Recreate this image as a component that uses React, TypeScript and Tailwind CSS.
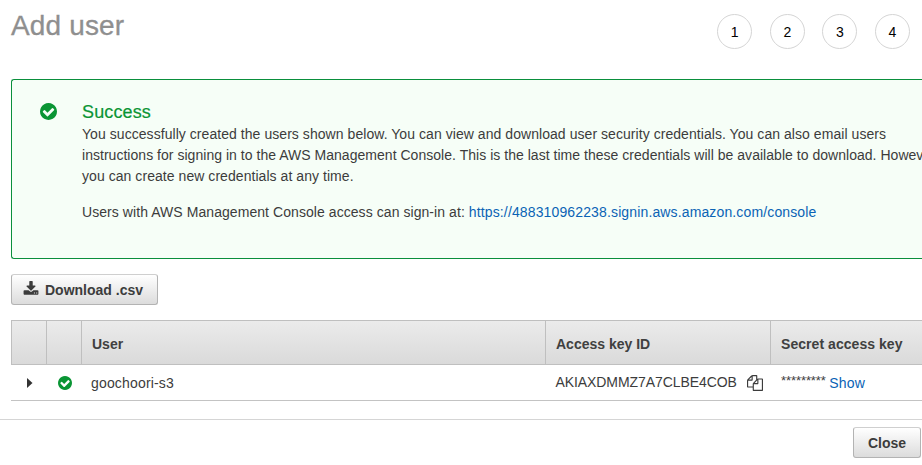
import React from "react";

const CheckCircle = ({ className }: { className: string }) => (
  <svg viewBox="0 0 1536 1536" fill="currentColor" className={className} aria-hidden="true">
    <path d="M1284 606q0-28-18-46l-91-90q-19-19-45-19t-45 19l-408 407-226-226q-19-19-45-19t-45 19l-91 90q-18 18-18 46 0 27 18 45l362 362q19 19 45 19 27 0 46-19l543-543q18-18 18-45zm252 162q0 209-103 385.5T1153.5 1433 768 1536t-385.5-103T103 1153.5 0 768t103-385.5T382.5 103 768 0t385.5 103T1433 382.5 1536 768z" />
  </svg>
);

const DownloadIcon = () => (
  <svg viewBox="0 0 1792 1792" fill="currentColor" className="-mt-0.5 h-4 w-4" aria-hidden="true">
    <path d="M1344 1344q0-26-19-45t-45-19-45 19-19 45 19 45 45 19 45-19 19-45zm256 0q0-26-19-45t-45-19-45 19-19 45 19 45 45 19 45-19 19-45zm128-224v320q0 40-28 68t-68 28h-1472q-40 0-68-28t-28-68v-320q0-40 28-68t68-28h465l135 136q58 56 136 56t136-56l136-136h464q40 0 68 28t28 68zm-325-569q17 41-14 70l-448 448q-18 19-45 19t-45-19l-448-448q-31-29-14-70 17-39 59-39h256v-448q0-26 19-45t45-19h256q26 0 45 19t19 45v448h256q42 0 59 39z" />
  </svg>
);

const CopyIcon = () => (
  <svg viewBox="0 0 1792 1792" fill="currentColor" className="h-4 w-4 shrink-0" aria-hidden="true">
    <path d="M1696 384q40 0 68 28t28 68v1216q0 40-28 68t-68 28h-960q-40 0-68-28t-28-68v-288h-544q-40 0-68-28t-28-68v-672q0-40 20-88t48-76l408-408q28-28 76-48t88-20h416q40 0 68 28t28 68v328q68-40 128-40h416zm-544 213l-299 299h299v-299zm-640-384l-299 299h299v-299zm196 647l316-316v-416h-384v416q0 40-28 68t-68 28h-416v640h512v-256q0-40 20-88t48-76zm956 804v-1152h-384v416q0 40-28 68t-68 28h-416v640h896z" />
  </svg>
);

const buttonClass =
  "flex items-center rounded-[3px] border border-[#b3b3b3] border-t-[#cfcfcf] bg-linear-to-b from-white to-[#dcdcdc] font-bold text-[#3c3c3c]";

export default function App() {
  return (
    <div className="flex h-[465px] w-[922px] flex-col overflow-hidden bg-white font-['Helvetica_Neue','Liberation_Sans',Arial,sans-serif] text-sm whitespace-nowrap text-[#3c3c3c]">
      <header className="flex h-[79px] shrink-0 justify-between pr-3 pl-[11px]">
        <h1 className="pt-2 text-[28px] leading-9 tracking-[0.15px] text-[#8f8f8f] [-webkit-text-stroke:0.3px_#8f8f8f]">Add user</h1>
        <ol className="flex gap-[17.6px] pt-3.5">
          {[1, 2, 3, 4].map((n) => (
            <li
              key={n}
              className="flex h-[35px] w-[35px] items-center justify-center rounded-full border border-[#d5d5d5] pt-px text-sm text-black"
            >
              {n}
            </li>
          ))}
        </ol>
      </header>

      <section className="ml-[11px] flex h-[180px] shrink-0 rounded-l-[3px] border border-r-0 border-[#0a8f3c] bg-[#f6fef7]">
        <div className="w-[70px] shrink-0 pt-[22.5px] pl-[27.5px] text-[#0a9534]">
          <CheckCircle className="h-[17px] w-[17px]" />
        </div>
        <div className="pt-[21px] leading-[21px]">
          <h2 className="h-[23px] text-lg leading-[23px] tracking-[0.12px] text-[#0a9534] [-webkit-text-stroke:0.2px_#0a9534]">Success</h2>
          <p className="tracking-[0.055px]">
            You successfully created the users shown below. You can view and download user security credentials. You can also email users
            <br />
            <span className="tracking-[0.03px]">
              instructions for signing in to the AWS Management Console. This is the last time these credentials will be available to download. However,
            </span>
            <br />
            you can create new credentials at any time.
          </p>
          <p className="mt-[15px] tracking-[0.065px]">
            Users with AWS Management Console access can sign-in at:{" "}
            <a className="tracking-[0.135px] text-[#0a63b5]">https://488310962238.signin.aws.amazon.com/console</a>
          </p>
        </div>
      </section>

      <div className="mt-[15px] ml-[11px] flex shrink-0">
        <button className={`${buttonClass} h-[31px] w-[147px] gap-1.5 pl-[11px]`}>
          <DownloadIcon />
          <span>Download .csv</span>
        </button>
      </div>

      <div className="mt-[15px] ml-[11px] shrink-0 border-b border-[#c3c3c3]">
        <div className="grid h-[45px] grid-cols-[35px_35px_464px_225px_1fr] border border-r-0 border-[#bfbfbf] bg-linear-to-b from-[#ebebeb] to-[#dadada] font-bold leading-[47px] text-[#404040]">
          <div className="h-[43px] border-r border-[#bfbfbf]" />
          <div className="h-[43px] border-r border-[#bfbfbf]" />
          <div className="h-[43px] border-r border-[#bfbfbf] pl-2.5">User</div>
          <div className="h-[43px] border-r border-[#bfbfbf] pl-2.5">Access key ID</div>
          <div className="h-[43px] pl-2.5 tracking-[0.05px]">Secret access key</div>
        </div>
        <div className="grid h-[35px] grid-cols-[36px_35px_464px_225px_1fr] items-center">
          <div className="pl-4">
            <svg viewBox="0 0 6 10" className="h-2.5 w-1.5 fill-[#333]" aria-hidden="true">
              <path d="M0 0L5.5 5L0 10Z" />
            </svg>
          </div>
          <div className="pl-[11px] text-[#0a9534]">
            <CheckCircle className="h-3.5 w-3.5" />
          </div>
          <div className="pl-[9px] tracking-[0.17px]">goochoori-s3</div>
          <div className="flex items-center pl-[9.5px]">
            <span className="w-[191.5px] pb-0.5 tracking-[-0.08px]">AKIAXDMMZ7A7CLBE4COB</span>
            <CopyIcon />
          </div>
          <div className="flex items-center gap-[3.5px] pl-2.5">
            <span className="pb-1 text-[13px] leading-4 tracking-[-0.08px]">*********</span>
            <a className="tracking-[0.2px] text-[#0a63b5]">Show</a>
          </div>
        </div>
      </div>

      <footer className="mt-[18px] flex justify-end border-t border-[#d5d5d5] pt-[7px] pr-px">
        <button className={`${buttonClass} h-[31px] w-[68px] justify-center`}>Close</button>
      </footer>
    </div>
  );
}
